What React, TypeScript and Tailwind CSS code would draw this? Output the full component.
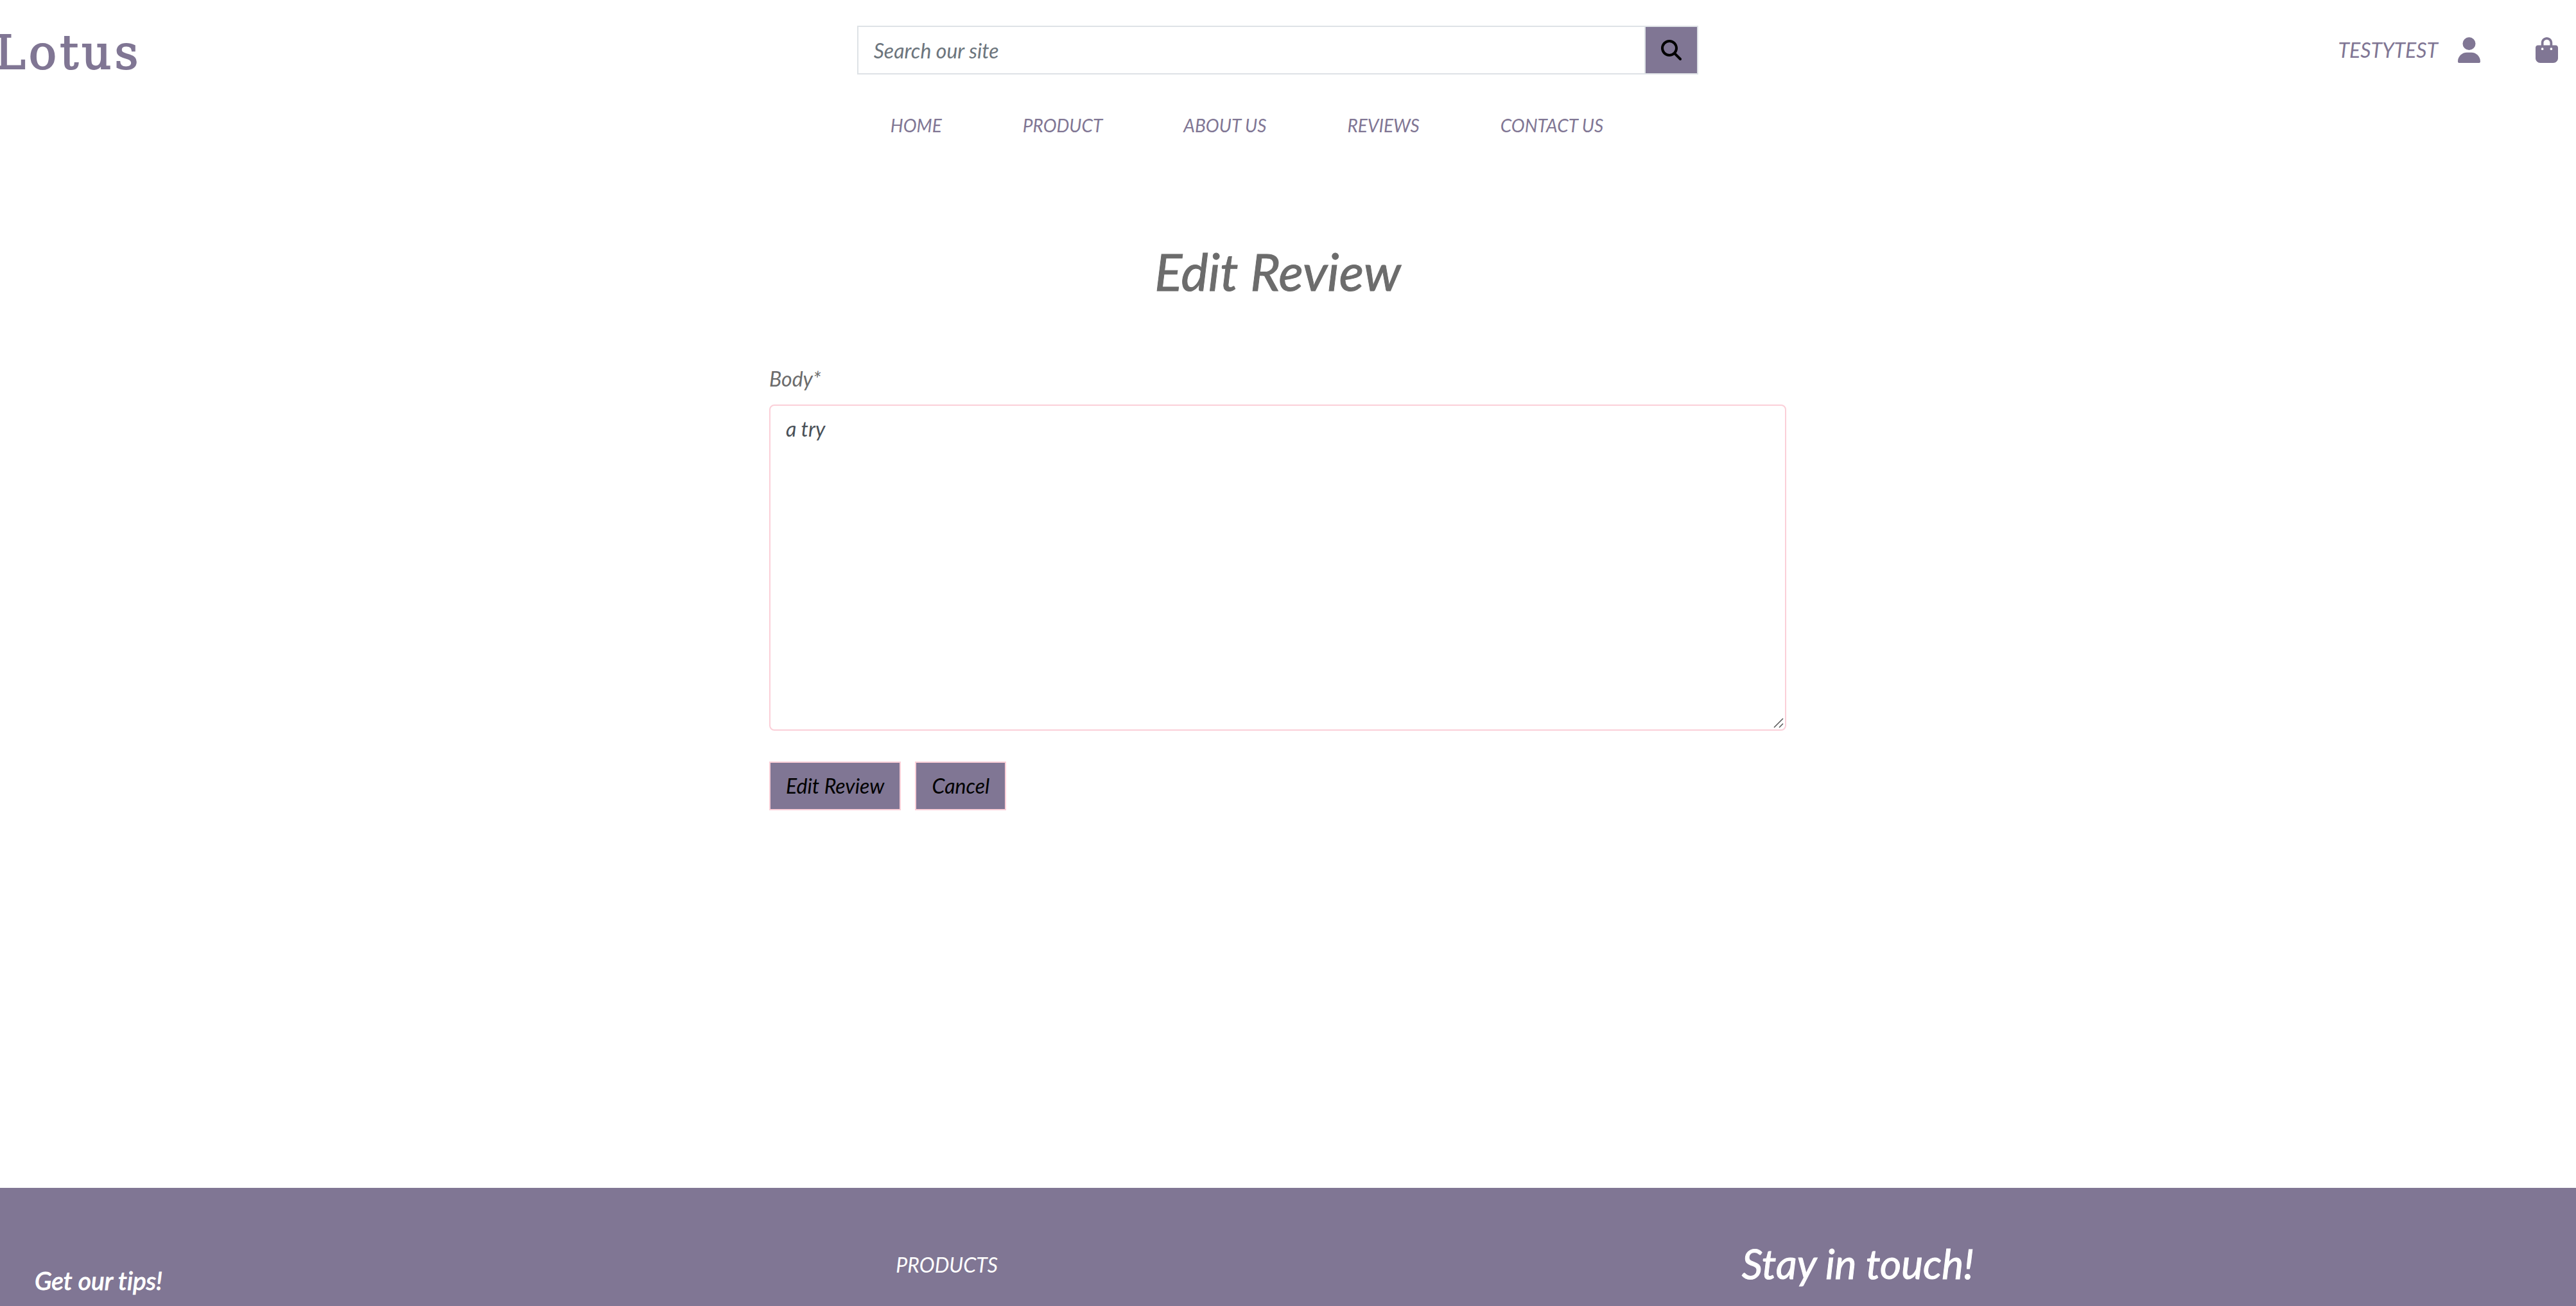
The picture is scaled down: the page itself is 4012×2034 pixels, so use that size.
import { FaBagShopping, FaMagnifyingGlass, FaUser } from "react-icons/fa6";

const navLinks = ["HOME", "PRODUCT", "ABOUT US", "REVIEWS", "CONTACT US"];

function Header() {
  return (
    <header className="pt-10 pr-8 text-[#807694]">
      <div className="grid grid-cols-3 items-center">
        <a
          href="#"
          className="-ml-2 pt-2 font-['DejaVu_Serif',serif] text-[72px] leading-[68px] not-italic tracking-[5px] [-webkit-text-stroke:2px]"
        >
          Lotus
        </a>
        <form className="flex px-2" onSubmit={(e) => e.preventDefault()}>
          <input
            type="text"
            aria-label="Search our site"
            placeholder="Search our site"
            className="h-19 min-w-0 flex-1 border-2 border-[#dee2e6] bg-white px-6 italic placeholder:text-[#6c757d]"
          />
          <button
            type="submit"
            aria-label="Search"
            className="-ml-0.5 h-19 border-2 border-[#dee2e6] bg-[#807694] px-6 text-black"
          >
            <FaMagnifyingGlass className="size-8" />
          </button>
        </form>
        <div className="-mr-1 flex items-center justify-end">
          <a href="#" className="flex items-center gap-[31px]">
            TESTYTEST
            <FaUser className="h-10 w-[35px]" />
          </a>
          <a href="#" aria-label="Shopping bag" className="ml-[86px]">
            <FaBagShopping className="h-10 w-[35px]" />
          </a>
        </div>
      </div>
      <nav className="mt-[58px] flex justify-center gap-[126px] pr-24 text-[28px] leading-[42px]">
        {navLinks.map((label) => (
          <a key={label} href="#">
            {label}
          </a>
        ))}
      </nav>
    </header>
  );
}

function ReviewForm() {
  return (
    <form
      className="mx-auto max-w-[1584px] pt-24"
      onSubmit={(e) => e.preventDefault()}
    >
      <label htmlFor="body" className="mb-4 block">
        Body*
      </label>
      <div className="relative">
        <textarea
          id="body"
          defaultValue="a try"
          className="block h-[508px] w-full resize-y rounded-lg border-2 border-[#fbcfd8] bg-white px-6 py-3 text-[#495057] italic [&::-webkit-resizer]:appearance-none"
        />
        <svg
          viewBox="0 0 16 16"
          className="pointer-events-none absolute right-1 bottom-1 size-4"
          fill="none"
          stroke="#555"
          strokeWidth="1.5"
          aria-hidden="true"
        >
          <path d="M1 15 15 1M9 15l6-6" />
        </svg>
      </div>
      <div className="mt-12 flex gap-[22px] text-black">
        <button
          type="submit"
          className="border-2 border-[#fbcfd8] bg-[#807694] px-6 py-3 italic"
        >
          Edit Review
        </button>
        <button
          type="button"
          className="border-2 border-[#fbcfd8] bg-[#807694] px-6 py-3 italic"
        >
          Cancel
        </button>
      </div>
    </form>
  );
}

function Footer() {
  return (
    <footer className="grid grid-cols-3 items-start bg-[#807694] pt-20 pb-2.5 text-white">
      <h3 className="mt-[34px] pl-[54px] text-[39px] leading-[60px] [font-variant-ligatures:none] [-webkit-text-stroke:1px]">
        Get our tips!
      </h3>
      <h4 className="mt-4 pl-[58px]">PRODUCTS</h4>
      <h2 className="pl-[38px] text-[64px] leading-[76px] [-webkit-text-stroke:1px]">
        Stay in touch!
      </h2>
    </footer>
  );
}

export default function App() {
  return (
    <div className="flex min-h-screen flex-col bg-white font-[Lato,sans-serif] text-[32px] leading-[48px] text-[#6c6c6c] italic">
      <Header />
      <main className="flex-1 pt-[158px] pr-8">
        <h1 className="text-center text-[80px] leading-[96px] [-webkit-text-stroke:1px]">
          Edit Review
        </h1>
        <ReviewForm />
      </main>
      <Footer />
    </div>
  );
}
